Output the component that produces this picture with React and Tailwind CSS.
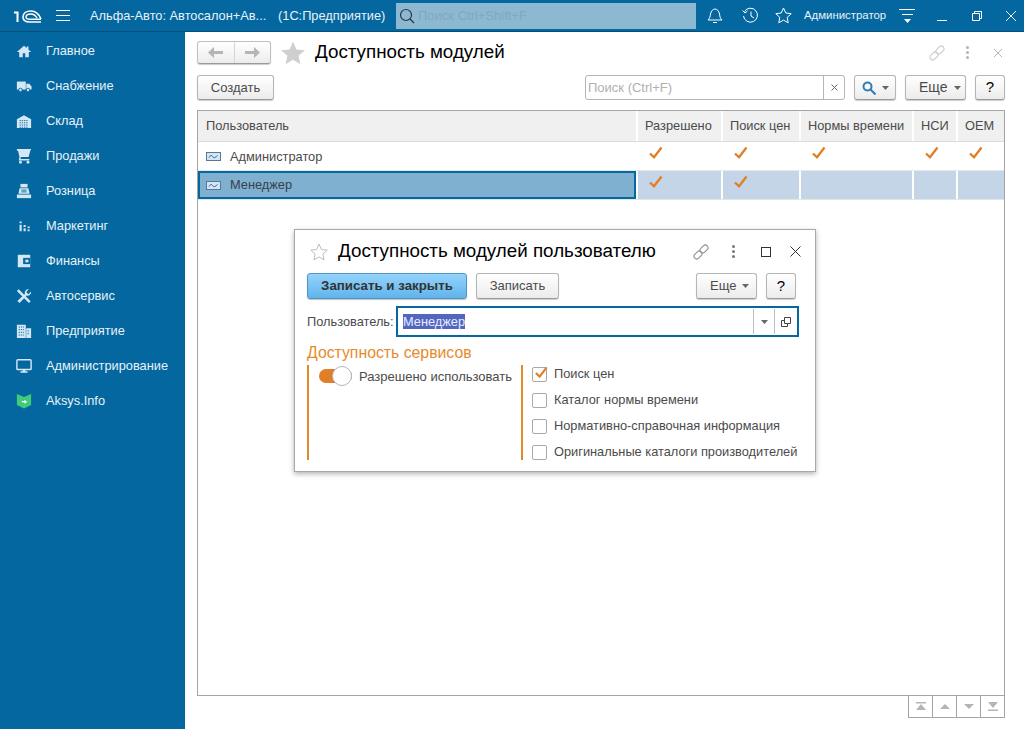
import React from "react";

const font = { fontFamily: '"Liberation Sans", Arial, sans-serif' };

function Glyph({ children, size = 16, className = "", box = "0 0 18 18" }) {
  return (
    <svg width={size} height={size} viewBox={box} className={"shrink-0 " + className}>
      {children}
    </svg>
  );
}

// sidebar icons
const icons = {
  home: <path d="M9 3 1 10h2.600v6h4v-4.500h2.800V16h4v-6H17l-3-2.700V4h-2v1.500z" fill="#d3e8f4" />,
  truck: (
    <>
      <path d="M1 4h10v9H1z" fill="#d3e8f4" />
      <path d="M11.500 6.500H15l2.500 3V13h-6z" fill="#d3e8f4" />
      <circle cx="5" cy="13.500" r="2" fill="#d3e8f4" stroke="#05679f" />
      <circle cx="13.500" cy="13.500" r="2" fill="#d3e8f4" stroke="#05679f" />
    </>
  ),
  store: (
    <>
      <path d="M1 7 9 2.500 17 7v10H1z" fill="#d3e8f4" />
      <path d="M4 8.500h10M4 11h10M4 13.500h10M4 16h10" stroke="#05679f" strokeDasharray="1.500 1" />
    </>
  ),
  cart: (
    <>
      <path d="M1 1h16l-1 2.500-1.800 6.500H5.500L5 12.500h10V14H3l.9-4L2.300 3H1z" fill="#d3e8f4" />
      <circle cx="5" cy="16" r="1.600" fill="#d3e8f4" />
      <circle cx="13.500" cy="16" r="1.600" fill="#d3e8f4" />
    </>
  ),
  till: (
    <>
      <path d="M5 1h8v4H5z" fill="#d3e8f4" />
      <path d="M4 6h10l1.200 6H2.800z" fill="#d3e8f4" />
      <path d="M6 8h6M6 10h6" stroke="#05679f" />
      <path d="M1 13h16v4H1z" fill="#d3e8f4" />
    </>
  ),
  bars: (
    <>
      <path d="M4 4h2.400v2H4zM4 7.500h2.400V15H4z" fill="#d3e8f4" />
      <path d="M8.500 8h2.400v2H8.500zM8.500 11.500h2.400V15H8.500z" fill="#d3e8f4" />
      <path d="M13 9.500h2.400v2H13zM13 13h2.400v2H13z" fill="#d3e8f4" />
    </>
  ),
  wallet: (
    <>
      <path d="M2 2h14v14H2z" fill="#d3e8f4" />
      <path d="M8 5.500h8v7H8z" fill="#05679f" />
      <path d="M10.500 7.500h3.500v3h-3.500z" fill="#d3e8f4" />
    </>
  ),
  tools: (
    <>
      <path d="M3 1.500 16.500 15l-2 2L1 3.500z" fill="#d3e8f4" />
      <path d="M17 4 14 7l-2.500-2.500 3-3a4 4 0 0 0-4.500 5.200L1.500 14.500l2.500 2.500 8-8.500A4 4 0 0 0 17 4z" fill="#d3e8f4" />
    </>
  ),
  office: (
    <>
      <path d="M1 2h10v15H1zM11.500 6H17v11h-5.500z" fill="#d3e8f4" />
      <path d="M3 4.500h6M3 7.500h6M3 10.500h6M3 13.500h6M13 9h2.500M13 12h2.500" stroke="#05679f" strokeDasharray="1.500 1" />
    </>
  ),
  monitor: (
    <>
      <rect x="1" y="2" width="16" height="11" rx="1" fill="none" stroke="#d3e8f4" strokeWidth="1.600" />
      <path d="M7.500 13.500h3V15h2.500v1.500H5V15h2.500z" fill="#d3e8f4" />
    </>
  ),
  aksys: (
    <>
      <path d="M1 1 9 4.500 17 1v12.500L9 17.500 1 13.500z" fill="#3fcb7a" />
      <path d="M6.500 10.500V9h3V7.500l3 2.500-3 2v-1.500z" fill="#fff" />
    </>
  ),
};

const menu = [
  ["home", "Главное"],
  ["truck", "Снабжение"],
  ["store", "Склад"],
  ["cart", "Продажи"],
  ["till", "Розница"],
  ["bars", "Маркетинг"],
  ["wallet", "Финансы"],
  ["tools", "Автосервис"],
  ["office", "Предприятие"],
  ["monitor", "Администрирование"],
  ["aksys", "Aksys.Info"],
];

function Btn({ children, className = "" }) {
  return (
    <div
      className={
        "flex items-center justify-center rounded-[3px] border border-[#b5b5b5] border-b-[#9a9a9a] bg-gradient-to-b from-white to-[#ececec] text-[13px] text-[#4b4b4b] shadow-[0_1px_1px_rgba(0,0,0,0.2)] " +
        className
      }
    >
      {children}
    </div>
  );
}

function Caret({ color = "#666" }) {
  return (
    <svg width="7" height="4" viewBox="0 0 7 4" className="shrink-0">
      <path d="M0 0h7L3.500 4z" fill={color} />
    </svg>
  );
}

function LinkIcon({ color }) {
  return (
    <svg width="16" height="16" viewBox="0 0 16 16" fill="none" stroke={color} strokeWidth="1">
      <rect x="6.500" y="2.300" width="9" height="5.400" rx="2.700" transform="rotate(-45 11 5)" />
      <rect x="0.500" y="8.300" width="9" height="5.400" rx="2.700" transform="rotate(-45 5 11)" />
    </svg>
  );
}

function Dots({ color }) {
  return (
    <div className="flex flex-col gap-[2px]">
      <div className={"h-[3px] w-[3px] rounded-full " + color} />
      <div className={"h-[3px] w-[3px] rounded-full " + color} />
      <div className={"h-[3px] w-[3px] rounded-full " + color} />
    </div>
  );
}

function Check({ size = 16 }) {
  return (
    <svg width={size} height={size} viewBox="0 0 16 16" fill="none">
      <path d="m2 8.500 4 3.800L13.500 2.500" stroke="#e07f28" strokeWidth="2.300" />
    </svg>
  );
}

function RowIcon() {
  return (
    <svg width="15" height="9" viewBox="0 0 15 9" className="shrink-0">
      <rect x="0.500" y="0.500" width="14" height="8" fill="#d5e4f2" stroke="#54799c" />
      <path d="M3 5.500C4.500 3 5.500 3 6.500 4.500S9 6 11.500 3.500" fill="none" stroke="#2a5d8c" />
    </svg>
  );
}

const columns = [
  ["Разрешено", "w-[85px]"],
  ["Поиск цен", "w-[78px]"],
  ["Нормы времени", "w-[113px]"],
  ["НСИ", "w-[44px]"],
  ["ОЕМ", "w-[48px]"],
];

function TopBar() {
  return (
    <div className="flex h-[32px] items-center border-b border-[#024f7c] bg-[#05679f] text-[12.8px] text-[#e6f2f9]">
      <svg width="30" height="16" viewBox="0 0 30 16" fill="none" stroke="#fff" className="ml-[13px] shrink-0">
        <path d="M1 4.500h3.500V14" strokeWidth="2" />
        <path d="M28 11c-2-5-5-8-10-8s-8 2.500-8 6 3 5 7 5h11" strokeWidth="1.600" />
        <path d="M24 10c-1.500-2.500-3.500-4-6-4s-5 1-5 3 2 2.300 4 2.300h11" strokeWidth="1.400" />
      </svg>
      <div className="ml-[13px] flex w-[14px] flex-col gap-[4px]">
        <div className="h-px bg-white" />
        <div className="h-px bg-white" />
        <div className="h-px bg-white" />
      </div>
      <span className="ml-[20px] w-[184px] whitespace-nowrap">Альфа-Авто: Автосалон+Ав...</span>
      <span className="ml-[4px] w-[118px] whitespace-nowrap">(1С:Предприятие)</span>
      <div className="flex h-[26px] w-[300px] items-center gap-[3px] bg-[#8db8d1] pl-[3px] text-[13px] text-[#7fa9c2]">
        <svg width="16" height="16" viewBox="0 0 16 16" fill="none" stroke="#26363f" strokeWidth="1.200">
          <circle cx="7" cy="7" r="5.500" />
          <path d="m11 11 4 4" />
        </svg>
        <span>Поиск Ctrl+Shift+F</span>
      </div>
      <svg width="16" height="17" viewBox="0 0 16 17" fill="none" stroke="#fff" className="ml-[11px]">
        <path d="M1 13c2-2 2-3 2.500-6S6 2 8 2s4 2 4.500 5 .5 4 2.500 6z" />
        <path d="M6 15.500h4" />
      </svg>
      <svg width="17" height="17" viewBox="0 0 17 17" fill="none" stroke="#fff" className="ml-[19px]">
        <path d="M2.500 4.500A7 7 0 1 1 1.500 9" />
        <path d="M0.500 3.500 3 6l2.500-2M9 4.500v4.500l3 2" />
      </svg>
      <svg width="17" height="17" viewBox="0 0 17 17" fill="none" stroke="#fff" className="ml-[16px]">
        <path d="m8.500 1 2.300 5 5.400.7-4 3.700 1 5.400-4.700-2.700-4.700 2.700 1-5.400-4-3.700 5.400-.7z" />
      </svg>
      <span className="ml-[12px] whitespace-nowrap text-[11.400px]">Администратор</span>
      <div className="ml-[13px] flex w-[16px] flex-col items-center gap-[4px]">
        <div className="h-px w-full bg-white" />
        <div className="h-px w-[11px] bg-white" />
        <Caret color="#fff" />
      </div>
      <div className="ml-[22px] mt-[10px] h-px w-[10px] bg-white" />
      <svg width="10" height="10" viewBox="0 0 10 10" fill="none" stroke="#fff" className="ml-[25px]">
        <path d="M.5 2.500h7v7h-7zM2.500 2.500v-2h7v7h-2" />
      </svg>
      <svg width="10" height="10" viewBox="0 0 10 10" fill="none" stroke="#fff" className="ml-[24px]">
        <path d="m0 0 10 10M10 0 0 10" />
      </svg>
    </div>
  );
}

function Sidebar() {
  return (
    <div className="flex w-[185px] shrink-0 flex-col bg-[#05679f] pt-px text-[12.8px] text-[#e6f2f9]">
      {menu.map(([icon, label]) => (
        <div key={label} className="flex h-[35px] items-center pl-[16px]">
          <Glyph>{icons[icon]}</Glyph>
          <span className="ml-[14px]">{label}</span>
        </div>
      ))}
    </div>
  );
}

function Table() {
  return (
    <div className="flex h-[586px] flex-col border border-[#a5a5a5] text-[12.8px] text-[#4b4b4b]">
      <div className="flex h-[31px] border-b border-[#dcdcdc] bg-[#f0f0f0]">
        <div className="flex-1 pl-[8px] leading-[30px]">Пользователь</div>
        {columns.map(([title, w]) => (
          <div key={title} className={"border-l-2 border-white pl-[7px] leading-[30px] whitespace-nowrap " + w}>
            {title}
          </div>
        ))}
      </div>
      <div className="flex h-[29px] border-b border-[#e4eaec]">
        <div className="flex flex-1 items-center gap-[9px] pl-[8px] pt-px">
          <RowIcon />
          <span>Администратор</span>
        </div>
        {columns.map(([title, w]) => (
          <div key={title} className={"pl-[12px] pt-[3px] " + w}>
            <Check />
          </div>
        ))}
      </div>
      <div className="flex h-[29px] border-b border-[#dfe7e9] bg-[#c3d5e6]">
        <div className="flex flex-1 items-center gap-[9px] border-2 border-[#05679f] bg-[#80b0d0] pl-[6px] text-[#33424d]">
          <RowIcon />
          <span>Менеджер</span>
        </div>
        {columns.map(([title, w], i) => (
          <div key={title} className={"border-l-2 border-white pl-[10px] pt-[3px] " + w}>
            {i < 2 && <Check />}
          </div>
        ))}
      </div>
    </div>
  );
}

function Pager() {
  const cell = "flex h-[21px] w-[24px] items-center justify-center border-l border-[#a5a5a5]";
  return (
    <div className="flex justify-end">
      <div className="flex border-r border-b border-[#a5a5a5]">
        <div className={cell}>
          <svg width="12" height="9" viewBox="0 0 12 9"><path d="M1 0h10v1.500H1zM6 2l5 6H1z" fill="#b5b5b5" /></svg>
        </div>
        <div className={cell}>
          <svg width="10" height="5" viewBox="0 0 10 5"><path d="M5 0l5 5H0z" fill="#b5b5b5" /></svg>
        </div>
        <div className={cell}>
          <svg width="10" height="5" viewBox="0 0 10 5"><path d="M0 0h10L5 5z" fill="#b5b5b5" /></svg>
        </div>
        <div className={cell}>
          <svg width="12" height="9" viewBox="0 0 12 9"><path d="M1 0h10L6 6zM1 7.500h10V9H1z" fill="#b5b5b5" /></svg>
        </div>
      </div>
    </div>
  );
}

function Checkbox({ checked, label }) {
  return (
    <div className="flex h-[16px] items-center gap-[7px]">
      <div className="relative h-[15px] w-[15px] rounded-[2px] border border-[#a9a9a9] bg-white">
        {checked && (
          <div className="absolute left-[1px] top-[-3px]">
            <Check size={15} />
          </div>
        )}
      </div>
      <span className="whitespace-nowrap">{label}</span>
    </div>
  );
}

function Dialog() {
  return (
    <div className="absolute left-[294px] top-[229px] h-[243px] w-[522px] border border-[#a8a8a8] bg-white px-[12px] text-[12.8px] text-[#4b4b4b] shadow-[0_2px_5px_rgba(0,0,0,0.3)]">
      <div className="flex h-[43px] items-center">
        <svg width="18" height="18" viewBox="0 0 18 18" fill="none" stroke="#bdbdbd" className="ml-[3px] shrink-0">
          <path d="m9 1 2.400 5.500 5.800.6-4.300 3.900 1.200 5.800L9 13.900l-5.100 2.900 1.200-5.800L.8 7.100l5.800-.6z" />
        </svg>
        <span className="ml-[10px] whitespace-nowrap text-[18.800px] text-black">Доступность модулей пользователю</span>
        <div className="ml-[37px]"><LinkIcon color="#8a8a8a" /></div>
        <div className="ml-[23px]"><Dots color="bg-[#777]" /></div>
        <div className="ml-[26px] h-[10px] w-[10px] border border-[#333]" />
        <svg width="11" height="11" viewBox="0 0 11 11" fill="none" stroke="#333" className="ml-[19px]">
          <path d="m.5.500 10 10M10.500.500l-10 10" />
        </svg>
      </div>
      <div className="flex h-[26px]">
        <div className="flex w-[160px] items-center justify-center rounded-[3px] border border-[#4f95c3] bg-gradient-to-b from-[#94d3fb] to-[#5fb4ec] text-[13.300px] font-bold text-[#333] shadow-[0_1px_1px_rgba(0,0,0,0.25)]">
          Записать и закрыть
        </div>
        <Btn className="ml-[9px] w-[83px]">Записать</Btn>
        <Btn className="ml-[137px] w-[61px] justify-start gap-[6px] pl-[13px] text-[13.500px]">
          Еще <Caret />
        </Btn>
        <Btn className="ml-[9px] w-[30px] text-[15px] text-black">?</Btn>
      </div>
      <div className="mt-[7px] flex h-[31px] items-center">
        <span className="w-[89px] whitespace-nowrap">Пользователь:</span>
        <div className="flex h-[31px] w-[403px] items-center border-2 border-[#05679f] pl-[5px]">
          <span className="flex-1"><span className="bg-[#5366bf] text-[#e8ecff]">Менеджер</span></span>
          <div className="flex h-[25px] w-[21px] items-center justify-center border-l border-[#bdbdbd]"><Caret /></div>
          <div className="flex h-[25px] w-[23px] items-center justify-center border-l border-[#bdbdbd]">
            <svg width="10" height="10" viewBox="0 0 10 10" fill="none" stroke="#444"><path d="M3.500.500h6v6h-6zM3.500 3.500h-3v6h6v-3" /></svg>
          </div>
        </div>
      </div>
      <div className="mt-[6px] text-[15.800px] leading-[20px] text-[#e68a2e]">Доступность сервисов</div>
      <div className="mt-[2px] flex h-[95px]">
        <div className="flex w-[214px] gap-[7px] border-l-2 border-[#e08a2b] pl-[10px] pt-[2px] text-[13px]">
          <div className="relative mt-[2px] h-[14px] w-[33px] rounded-full bg-[#e07f28]">
            <div className="absolute right-0 top-[-3px] h-[20px] w-[20px] rounded-full border border-[#b5b5b5] bg-white" />
          </div>
          <span className="whitespace-nowrap">Разрешено использовать</span>
        </div>
        <div className="flex flex-1 flex-col gap-[10px] border-l-2 border-[#e08a2b] pl-[9px] pt-px">
          <Checkbox checked label="Поиск цен" />
          <Checkbox label="Каталог нормы времени" />
          <Checkbox label="Нормативно-справочная информация" />
          <Checkbox label="Оригинальные каталоги производителей" />
        </div>
      </div>
    </div>
  );
}

export default function App() {
  return (
    <div className="relative h-[729px] w-[1024px] overflow-hidden bg-white" style={font}>
      <TopBar />
      <div className="flex h-[697px]">
        <Sidebar />
        <div className="flex-1 pl-[12px] pr-[19px] pt-[9px]">
          <div className="flex h-[23px] items-center">
            <div className="flex h-[23px] w-[74px] rounded-[3px] border border-[#c0c0c0] border-b-[#9a9a9a] bg-gradient-to-b from-white to-[#ececec] shadow-[0_1px_1px_rgba(0,0,0,0.2)]">
              <div className="flex flex-1 items-center justify-center border-r border-[#d5d5d5]">
                <svg width="15" height="11" viewBox="0 0 15 11"><path d="M6 0 0 5.500 6 11V7h9V4H6z" fill="#b5b5b5" /></svg>
              </div>
              <div className="flex flex-1 items-center justify-center">
                <svg width="15" height="11" viewBox="0 0 15 11"><path d="M9 0l6 5.500L9 11V7H0V4h9z" fill="#b5b5b5" /></svg>
              </div>
            </div>
            <svg width="24" height="24" viewBox="0 0 24 24" className="ml-[10px]">
              <path d="m12 .5 3.400 8 8.600.7-6.500 5.600 2 8.400-7.500-4.500-7.500 4.500 2-8.400L0 9.200l8.600-.7z" fill="#cfcfcf" />
            </svg>
            <span className="ml-[10px] text-[18.800px] text-black">Доступность модулей</span>
            <div className="ml-auto flex items-center">
              <LinkIcon color="#c8c8c8" />
              <div className="ml-[21px]"><Dots color="bg-[#b5b5b5]" /></div>
              <svg width="8" height="8" viewBox="0 0 8 8" fill="none" stroke="#b5b5b5" className="ml-[25px] mr-[3px]">
                <path d="m0 0 8 8M8 0 0 8" />
              </svg>
            </div>
          </div>
          <div className="mt-[11px] flex h-[25px]">
            <Btn className="w-[77px]">Создать</Btn>
            <div className="ml-[311px] flex w-[260px] rounded-[3px] border border-[#b5b5b5] bg-white text-[13px] text-[#b0b0b0]">
              <span className="flex-1 pl-[2px] leading-[23px]">Поиск (Ctrl+F)</span>
              <div className="flex w-[21px] items-center justify-center border-l border-[#b5b5b5] text-[#666]">
                <svg width="7" height="7" viewBox="0 0 7 7" fill="none" stroke="#666"><path d="m.5.500 6 6M6.500.500l-6 6" /></svg>
              </div>
            </div>
            <Btn className="ml-[9px] w-[42px] gap-[6px]">
              <svg width="14" height="14" viewBox="0 0 14 14" fill="none" stroke="#2c7cb5" strokeWidth="2">
                <circle cx="5.500" cy="5.500" r="4" />
                <path d="m8.500 8.500 5 5" />
              </svg>
              <Caret />
            </Btn>
            <Btn className="ml-[9px] w-[61px] justify-start gap-[6px] pl-[13px] text-[14px]">
              Еще <Caret />
            </Btn>
            <Btn className="ml-[9px] w-[30px] text-[15px] text-black">?</Btn>
          </div>
          <div className="mt-[10px]">
            <Table />
          </div>
          <Pager />
        </div>
      </div>
      <Dialog />
    </div>
  );
}
